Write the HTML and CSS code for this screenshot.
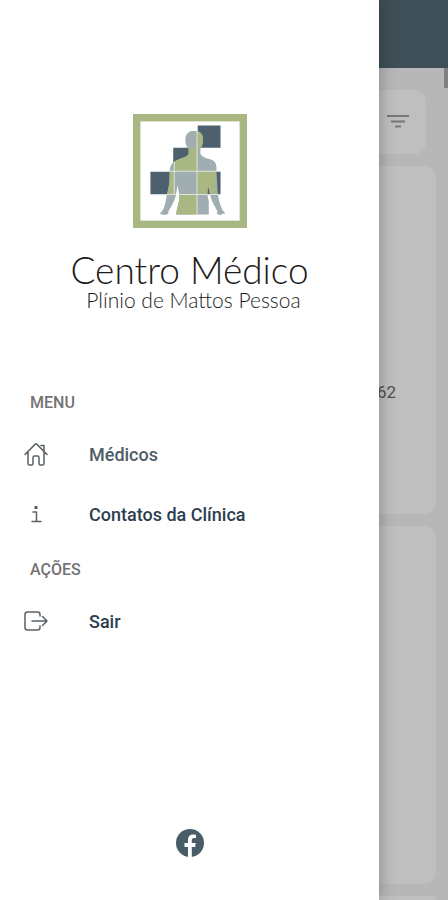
FILE: index.html
```html
<!DOCTYPE html>
<html lang="pt-BR">
<head>
<meta charset="utf-8">
<meta name="viewport" content="width=device-width, initial-scale=1">
<title>Centro Médico</title>
<link rel="stylesheet" href="styles.css">
</head>
<body>
<div class="page">
  <header class="topbar"></header>
  <main class="content">
    <div class="toolbar">
      <button class="filter" type="button" aria-label="Filtrar">
        <svg width="24" height="16" viewBox="0 0 24 16"><path d="M1 2h22M5 7.500h14M9 12.500h6" fill="none" stroke="#777" stroke-width="2"/></svg>
      </button>
    </div>
    <article class="card"><p class="phone">62</p></article>
    <article class="card"></article>
    <article class="card last"></article>
  </main>
  <div class="scroll-thumb"></div>
</div>

<aside class="drawer">
  <div class="brand">
    <svg class="emblem" viewBox="24 28 340 340" role="img" aria-label="Emblema">
      <defs>
        <clipPath id="figure">
          <path d="M180 105C180 88 190 78 207 78S234 88 233 106C232 120 228 127 225 132V145C228 158 245 160 260 165C272 170 274 182 273 198C274 222 276 232 276 252C277 282 285 300 289 311L300 326L294 325L285 329L274 326L276 317C268 302 257 287 253 264L249 246C244 262 246 273 250 287V328H153C154 307 165 285 162 270L157 240C154 260 151 281 141 299L130 317L129 326L118 329L104 326L115 311C123 292 122 275 128 257C135 229 132 213 134 193C136 174 150 167 163 162C177 157 188 154 190 146V132C183 125 180 118 180 105Z"/>
        </clipPath>
      </defs>
      <rect x="35" y="39" width="318" height="318" fill="#fff" stroke="#a9b782" stroke-width="22"/>
      <path d="M217 62h68v67h-68zM144 129h70v69h-70zM76 200h70v67H76zM216 200h69v67h-69z" fill="#4d606e"/>
      <g clip-path="url(#figure)">
        <path d="M100 70h204v264H100z" fill="#a0adb1"/>
        <path d="M214 70h30v59h-30zM146 129h68v70h-68zM100 199h46v69h-46zM214 199h57v69h-57zM150 268h64v64h-64z" fill="#a9b782"/>
      </g>
      <path d="M147 165v103M215 62v267M76 199h209M76 268h209" fill="none" stroke="#dde3dc" stroke-width="3" clip-path="url(#figure)"/>
    </svg>
    <h1 class="name">Centro Médico</h1>
    <p class="subname">Plínio de Mattos Pessoa</p>
  </div>

  <nav class="menu">
    <h2 class="label">MENU</h2>
    <a class="item active" href="#medicos">
      <svg class="icon" viewBox="0 0 24 24"><path d="M1 12.500 11 2.400q1-1 2 0l10 10.100M17 3.500h3v6M4 10v11.500q0 1.500 1.500 1.500H7.500q1.500 0 1.500-1.500V15.500q0-1.500 1.500-1.500h3q1.500 0 1.500 1.500v6q0 1.500 1.500 1.500h2q1.500 0 1.500-1.500V10"/></svg>
      <span>Médicos</span>
    </a>
    <a class="item" href="#contatos">
      <svg class="icon" viewBox="0 0 24 24"><path d="M9 10h3.500v9.500M8 19.500h9"/><path d="M10.500 4h3v3h-3z" class="dot"/></svg>
      <span>Contatos da Clínica</span>
    </a>
    <h2 class="label">AÇÕES</h2>
    <a class="item" href="#sair">
      <svg class="icon" viewBox="0 0 24 24"><path d="M16 7V5.500Q16 3 13.500 3h-10Q1 3 1 5.500v13Q1 21 3.500 21h10Q16 21 16 18.500V17M8 12h15M18.500 7.500 23 12l-4.500 4.500"/></svg>
      <span>Sair</span>
    </a>
  </nav>

  <a class="social" href="#facebook" aria-label="Facebook">
    <svg width="28" height="28" viewBox="0 0 28 28"><circle cx="14" cy="14" r="14" fill="#485d68"/><path d="M12 28V18H8.500V14H12V11Q12 5.500 17 5.500q2 0 3 .3V9h-2q-2.200 0-2.200 2.200V14h4l-.7 4h-3.300v10z" fill="#fff"/></svg>
  </a>
</aside>
</body>
</html>
```

FILE: styles.css
```css
* {
  box-sizing: border-box;
}

body,
h1,
h2,
p {
  margin: 0;
}

body {
  position: relative;
  height: 100vh;
  overflow: hidden;
  font-family: Roboto, "Liberation Sans", sans-serif;
  background: #b7b7b7;
}

.page {
  position: relative;
  display: flex;
  flex-direction: column;
  height: 100%;
}

.topbar {
  flex: none;
  height: 68px;
  background: #3f4f57;
}

.content {
  display: flex;
  flex: 1;
  flex-direction: column;
  gap: 12px;
  min-height: 0;
  padding: 22px 12px 0;
  overflow: hidden;
}

.toolbar {
  display: flex;
  flex: none;
  justify-content: flex-end;
  align-items: center;
  height: 64px;
  margin-right: 10px;
  padding-right: 16px;
  border-radius: 12px;
  background: #bfbfbf;
}

.filter {
  display: flex;
  padding: 0;
  border: 0;
  background: none;
}

.card {
  flex: none;
  height: 348px;
  padding: 216px 40px 0;
  border-radius: 12px;
  background: #bfbfbf;
}

.card + .card {
  height: 358px;
}

.card + .last {
  flex: 1;
  height: auto;
  padding: 0;
  border-radius: 12px 12px 0 0;
}

.phone {
  color: #505050;
  font-size: 17px;
  line-height: 20px;
  text-align: right;
}

.scroll-thumb {
  position: absolute;
  top: 68px;
  right: 0;
  width: 4px;
  height: 20px;
  background: #808080;
}

.drawer {
  position: absolute;
  top: 0;
  left: 0;
  display: flex;
  flex-direction: column;
  width: 85%;
  max-width: 379px;
  height: 100%;
  padding: 114px 0 43px;
  background: #fff;
  box-shadow: 0 0 16px rgba(0, 0, 0, 0.3);
}

.brand {
  display: flex;
  flex-direction: column;
  align-items: center;
  color: #1c1c1c;
  font-family: Lato, sans-serif;
}

.emblem {
  width: 114px;
  height: 114px;
}

.name {
  margin-top: 23px;
  font-size: 37px;
  font-weight: 300;
  line-height: 37px;
}

.subname {
  padding-left: 8px;
  font-size: 21px;
  font-weight: 300;
  line-height: 24px;
}

.menu {
  display: flex;
  flex-direction: column;
  margin-top: 68px;
}

.label {
  height: 44px;
  padding: 13px 30px 0;
  color: #737373;
  font-size: 16px;
  font-weight: 500;
  line-height: 20px;
}

.item + .label {
  height: 47px;
  padding-top: 16px;
}

.item {
  display: flex;
  align-items: center;
  gap: 41px;
  height: 60px;
  padding: 0 24px;
  color: #2c3e50;
  font-size: 18px;
  font-weight: 500;
  text-decoration: none;
}

.active {
  color: #4d5d66;
}

.icon {
  width: 24px;
  height: 24px;
  fill: none;
  stroke: #5a6265;
  stroke-width: 1.500;
  stroke-linejoin: round;
  stroke-linecap: round;
}

.dot {
  fill: #5a6265;
  stroke: none;
}

.social {
  display: flex;
  align-self: center;
  margin-top: auto;
}
```
